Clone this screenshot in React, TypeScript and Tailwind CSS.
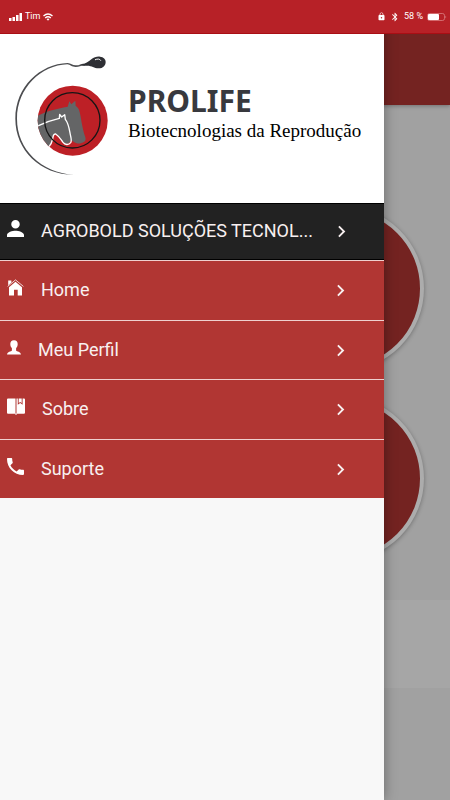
import type { ReactNode } from 'react'
import { MdBluetooth, MdChevronRight, MdLock } from 'react-icons/md'

const PersonIcon = () => (
    <svg viewBox="4 4 16 16" className="w-[17px] h-[17px]" fill="currentColor">
        <path d="M12 12c2.210 0 4-1.790 4-4s-1.790-4-4-4-4 1.790-4 4 1.790 4 4 4zm0 2c-2.670 0-8 1.340-8 4v2h16v-2c0-2.660-5.330-4-8-4z" />
    </svg>
)

const HomeIcon = () => (
    <svg viewBox="0 0 17 17" className="w-[17px] h-[17px]" fill="currentColor">
        <path d="M2 8.200 8.500 2.800 15 8.200V16.500h-4.300v-5.700H7v5.700H2z" />
        <path d="M.6 7.400 8.500.9l7.900 6.500" fill="none" stroke="currentColor" strokeWidth=".8" />
        <path d="M1.200 1.600h3.200v1.900L1.200 6.200z" />
    </svg>
)

const BustIcon = () => (
    <svg viewBox="0 0 14 17" className="w-[14px] h-[17px]" fill="currentColor">
        <path d="M7 1.200c2.500 0 3.700 1.400 3.700 3.800 0 1.800-.6 3.200-1.600 4.200v2.300c.8 1.300 4.400 1 4.900 4H0c.5-3 4.100-2.700 4.900-4V9.200C3.900 8.200 3.300 6.800 3.300 5 3.300 2.600 4.500 1.200 7 1.200z" />
    </svg>
)

const BookIcon = () => (
    <svg viewBox="0 0 18 17" className="w-[18px] h-[17px]" fill="currentColor">
        <path d="M1 .5h7.500v15.300H1a1 1 0 0 1-1-1V1.500a1 1 0 0 1 1-1z" />
        <path d="M9.500.5h1.300v6.300l2.400-1.700 2.400 1.700V.5H17a1 1 0 0 1 1 1v13.300a1 1 0 0 1-1 1H9.500z" />
        <path d="M11.700.5h3v4.600l-1.500-1.100-1.500 1.100z" />
        <path d="M8.500 15h1v2h-1z" />
    </svg>
)

const PhoneIcon = () => (
    <svg viewBox="3 3 18 18" className="w-[17px] h-[17px]" fill="currentColor">
        <path d="M6.620 10.790c1.440 2.830 3.760 5.140 6.590 6.590l2.200-2.200c.27-.27.67-.36 1.020-.24 1.120.37 2.330.57 3.570.57.55 0 1 .45 1 1V20c0 .55-.45 1-1 1-9.390 0-17-7.610-17-17 0-.55.45-1 1-1h3.500c.55 0 1 .45 1 1 0 1.250.2 2.450.57 3.570.11.35.03.74-.25 1.020l-2.200 2.200z" />
    </svg>
)

const Logo = () => (
    <svg viewBox="45 48 282 360" className="w-[94px] h-[120px] shrink-0" aria-hidden="true">
        <defs>
            <clipPath id="disc">
                <circle cx="218" cy="242" r="105" />
            </clipPath>
        </defs>
        {/* swoosh, thicker on the left and thin at its tail */}
        <path
            d="M222 404C120 404 46 330 46 236 46 140 120 72 203 69c10 1 14 7 24 7 12 0 14-5 26-5l2 6c-12-1-16 4-28 4-12 0-16-7-25-8C124 76 51 144 51 236c0 92 72 162 171 168z"
            fill="#4c4d50"
        />
        <path
            d="M243 74c14-3 22-9 31-16 8-6 17-9 26-8 11 1 17 7 17 15 0 12-8 20-21 20-14 0-20-8-34-8-8 0-14 1-19-3z"
            fill="#2e2f34"
        />
        <path d="M286 59c6-3 14-3 16 2" fill="none" stroke="#fff" strokeWidth="3" strokeLinecap="round" />
        <circle cx="218" cy="242" r="105" fill="#bd2026" />
        {/* horse heads, cut off by the disc on the left */}
        <g clipPath="url(#disc)">
            <path
                d="M105 232c20-14 62-26 98-32l5-16 6 9 12-11 1 16c10 6 12 16 15 32 4 26 8 44 14 62 3 10-2 15-14 18-8 2-16-1-21-5l-8-5c-3 10-14 16-23 8-8-8-10-22-26-26-8 2-6 22-16 36H105z"
                fill="#646566"
            />
            <path
                d="M105 262c24-13 46-21 73-27l1-12 6 8 9-7 2 14c10 12 12 30 15 46 2 10 5 18 1 24-6 8-17 7-23-1-6-7-10-17-22-25-7-1-8 8-9 15-2 9-4 15-11 23"
                fill="none"
                stroke="#fff"
                strokeWidth="4"
                strokeLinejoin="round"
            />
        </g>
        <circle cx="217" cy="241" r="83" fill="none" stroke="#151515" strokeWidth="4" />
    </svg>
)

const StatusBar = () => (
    <header className="relative z-20 flex h-[34px] items-center justify-between border-b border-[#a90e14] bg-[#b72127] pl-[9px] pr-[3px] text-[9px] text-white">
        <div className="flex items-center gap-[3px]">
            <svg viewBox="0 0 13 8" className="w-[13px] h-2" fill="currentColor">
                <path d="M0 5h2.500v3H0zM3.500 4H6v4H3.500zM7 2h2.500v6H7zM10.500 0H13v8h-2.500z" />
            </svg>
            <span>Tim</span>
            <svg viewBox="0 0 10 8" className="w-[10px] h-2" fill="none" stroke="currentColor" strokeWidth="1.400">
                <path d="M.5 3Q5-1 9.500 3M2.200 5Q5 2.600 7.800 5" />
                <path d="M5 7.800 3.500 6Q5 5 6.500 6z" fill="currentColor" stroke="none" />
            </svg>
        </div>
        <div className="flex items-center gap-1">
            <MdLock size={9} />
            <MdBluetooth size={10} />
            <span>58 %</span>
            <svg viewBox="0 0 20 8" className="w-5 h-2">
                <rect x=".5" y=".5" width="17" height="7" rx="2" fill="none" stroke="#e08a8d" strokeWidth=".7" />
                <rect x="1" y="1" width="11" height="6" rx="1" fill="#fff" />
                <path d="M18.500 2.500q1.500 1.500 0 3z" fill="#e08a8d" />
            </svg>
        </div>
    </header>
)

type MenuItem = {
    label: string
    icon: ReactNode
}

const menuItems: MenuItem[] = [
    { label: 'Home', icon: <HomeIcon /> },
    { label: 'Meu Perfil', icon: <BustIcon /> },
    { label: 'Sobre', icon: <BookIcon /> },
    { label: 'Suporte', icon: <PhoneIcon /> },
]

const MenuRow = ({ label, icon }: MenuItem) => (
    <a href="#" className="flex h-full items-center gap-[17px] pl-[7px] pr-8">
        <span className="shrink-0 pb-1.5 text-white">{icon}</span>
        <span className="flex-1 pb-0.5 whitespace-nowrap">{label}</span>
        <MdChevronRight size={23} className="shrink-0" />
    </a>
)

const App = () => {
    return (
        <div className="relative flex min-h-screen flex-col overflow-hidden bg-[#a1a1a1] font-['Roboto',sans-serif]">
            <StatusBar />

            {/* Page behind the open menu */}
            <div className="h-[71px] bg-[#742321] shadow-[0_1px_4px_rgba(0,0,0,0.3)]" />
            <main className="flex flex-col">
                <div className="flex flex-col items-end gap-[25px] pr-[26px] pt-[101px] pb-[39px]">
                    <div className="size-[165px] rounded-full border-4 border-[#acacac] bg-[#742321] shadow-[0_1px_4px_rgba(0,0,0,0.3)]" />
                    <div className="size-[165px] rounded-full border-4 border-[#acacac] bg-[#742321] shadow-[0_1px_4px_rgba(0,0,0,0.3)]" />
                </div>
                <div className="h-[88px] bg-[#a6a6a6]" />
            </main>

            {/* Side menu */}
            <aside className="absolute inset-y-0 left-0 z-10 w-[384px] max-w-full bg-[#f8f8f8] pt-[34px] shadow-[0_0_12px_rgba(0,0,0,0.35)]">
                <div className="flex h-[169px] items-start gap-[19px] bg-white pl-[15px] pt-[22px]">
                    <Logo />
                    <div className="pt-[29px] whitespace-nowrap">
                        <h1 className="font-['Noto_Sans',sans-serif] text-[30px] leading-8 font-bold text-[#38393e]">PROLIFE</h1>
                        <p className="font-['Liberation_Serif',serif] text-[19px] leading-7 text-black">
                            Biotecnologias da Reprodução
                        </p>
                    </div>
                </div>
                <nav className="text-[18px] text-[#f8f0f0]">
                    <div className="h-[57px] border-y border-black bg-[#222]">
                        <MenuRow label="AGROBOLD SOLUÇÕES TECNOL..." icon={<PersonIcon />} />
                    </div>
                    <ul>
                        {menuItems.map((item) => (
                            <li key={item.label} className="border-t border-[#efd0ce] bg-[#b13633] odd:h-[60px] even:h-[59px]">
                                <MenuRow {...item} />
                            </li>
                        ))}
                    </ul>
                </nav>
            </aside>
        </div>
    )
}

export default App
